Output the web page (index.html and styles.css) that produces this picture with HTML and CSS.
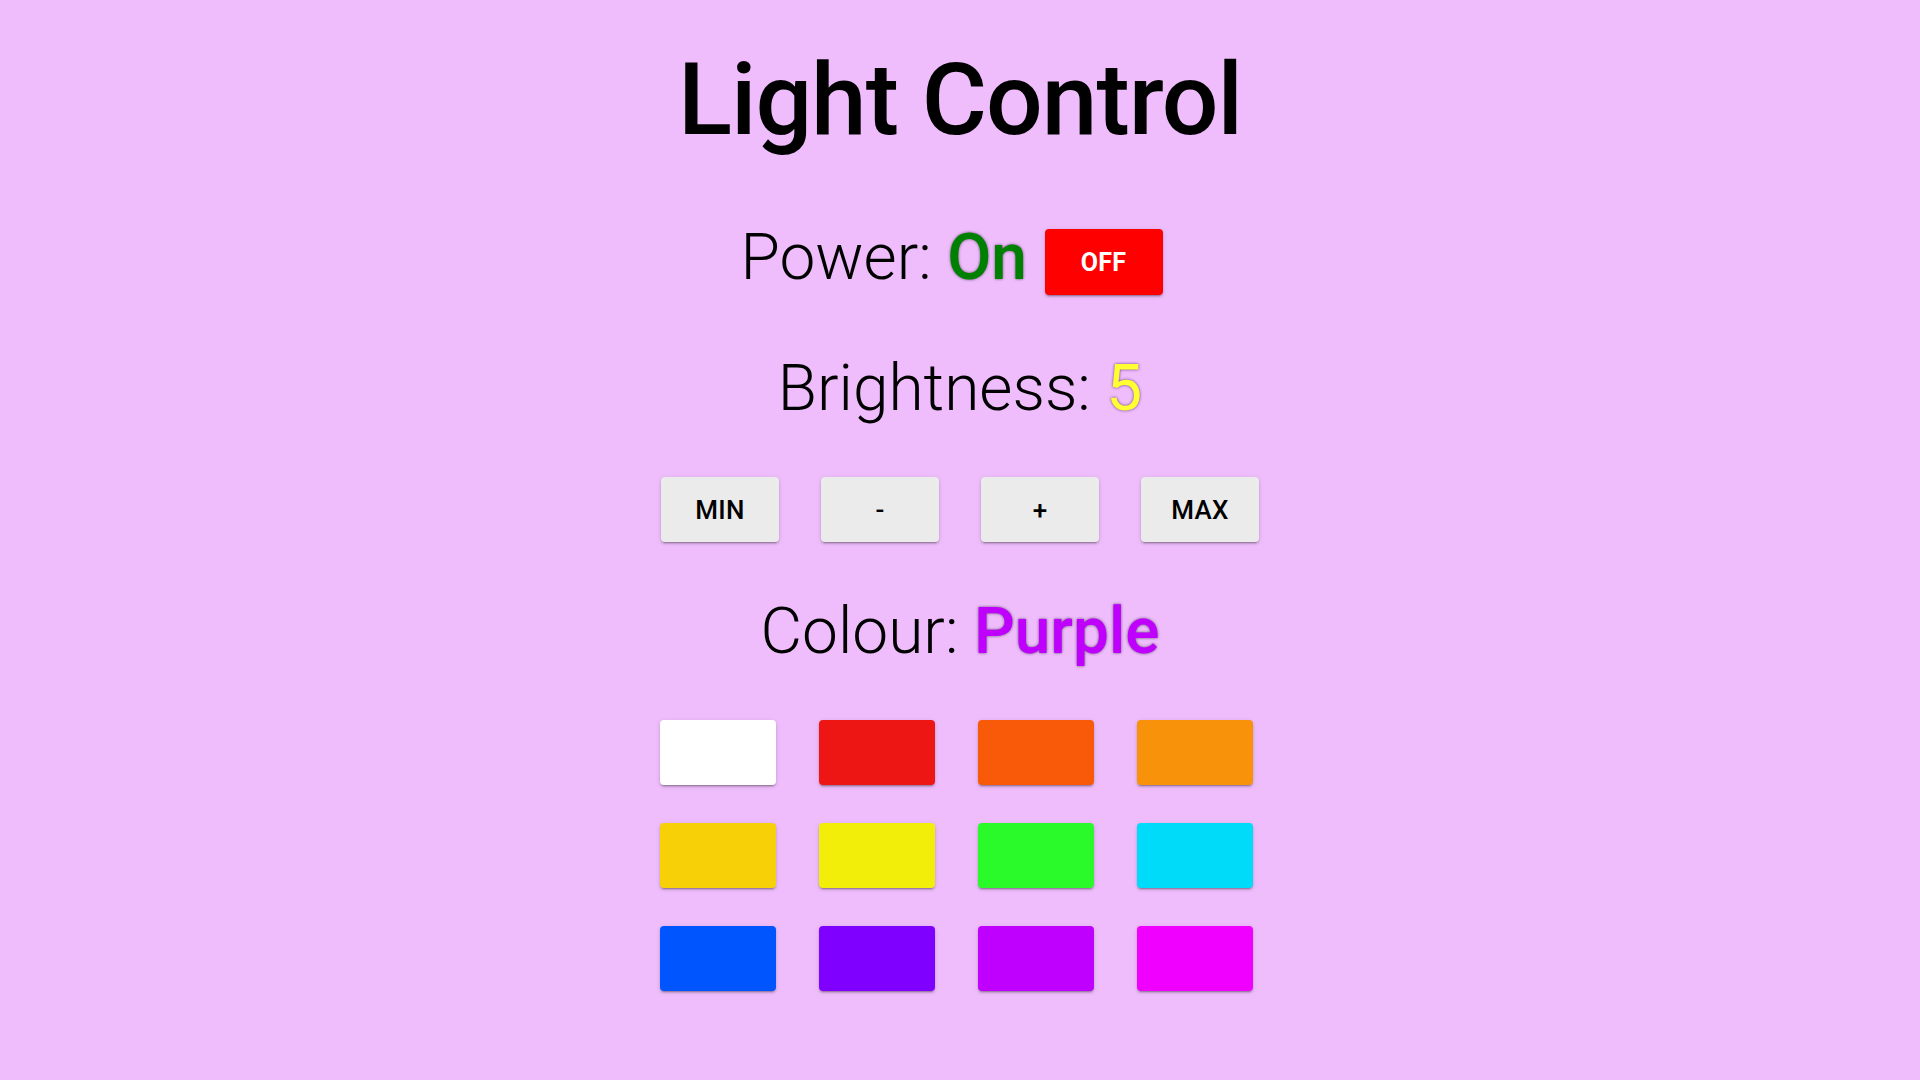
FILE: index.html
```html
<!DOCTYPE html>
<html lang="en">
<head>
<meta charset="utf-8">
<title>Light Control</title>
<link rel="stylesheet" href="styles.css">
</head>
<body>
<main class="app">
  <h1 class="title">Light Control</h1>

  <div class="status power">
    <span class="label">Power:</span>
    <span class="value value-on">On</span>
    <button class="btn btn-off" type="button">OFF</button>
  </div>

  <div class="status brightness">
    <span class="label">Brightness:</span>
    <span class="value value-bright">5</span>
  </div>

  <div class="controls">
    <button class="btn btn-grey" type="button">MIN</button>
    <button class="btn btn-grey" type="button">-</button>
    <button class="btn btn-grey" type="button">+</button>
    <button class="btn btn-grey" type="button">MAX</button>
  </div>

  <div class="status colour">
    <span class="label">Colour:</span>
    <span class="value value-colour">Purple</span>
  </div>

  <div class="swatches">
    <button class="swatch sw-white" type="button" aria-label="White"></button>
    <button class="swatch sw-red" type="button" aria-label="Red"></button>
    <button class="swatch sw-orangered" type="button" aria-label="Orange red"></button>
    <button class="swatch sw-orange" type="button" aria-label="Orange"></button>
    <button class="swatch sw-gold" type="button" aria-label="Gold"></button>
    <button class="swatch sw-yellow" type="button" aria-label="Yellow"></button>
    <button class="swatch sw-green" type="button" aria-label="Green"></button>
    <button class="swatch sw-cyan" type="button" aria-label="Cyan"></button>
    <button class="swatch sw-blue" type="button" aria-label="Blue"></button>
    <button class="swatch sw-violet" type="button" aria-label="Violet"></button>
    <button class="swatch sw-purple" type="button" aria-label="Purple"></button>
    <button class="swatch sw-magenta" type="button" aria-label="Magenta"></button>
  </div>
</main>
</body>
</html>
```

FILE: styles.css
```css
html, body {
  margin: 0;
  padding: 0;
}

body {
  background: #efbdfc;
  color: #000;
  font-family: Roboto, "Liberation Sans", Arial, sans-serif;
  min-height: 1080px;
}

.app {
  display: flex;
  flex-direction: column;
  align-items: center;
}

.title {
  margin: 50px 0 0;
  font-size: 100px;
  font-weight: 500;
  line-height: 100px;
  letter-spacing: -1px;
}

.status {
  font-size: 64px;
  font-weight: 300;
  line-height: 75px;
  height: 75px;
  white-space: nowrap;
}

.power {
  margin-top: 70px;
  padding-right: 17px;
}

.brightness {
  margin-top: 56px;
}

.colour {
  margin-top: 52px;
}

.value {
  font-weight: 500;
  text-shadow: 0 0 3px rgba(0, 0, 0, 0.6);
}

.value-on {
  color: #008000;
}

.value-bright {
  color: #ffff33;
  font-weight: 400;
  text-shadow: 0 0 3px rgba(60, 0, 80, 0.75);
}

.value-colour {
  color: #bf00ff;
}

.btn {
  box-sizing: border-box;
  width: 118px;
  height: 66px;
  border: 0;
  border-radius: 4px;
  padding: 0;
  font-family: Roboto, "Liberation Sans", Arial, sans-serif;
  font-size: 25px;
  font-weight: 500;
  letter-spacing: 0.3px;
  cursor: pointer;
  box-shadow: 0 3px 1px -2px rgba(0, 0, 0, 0.2),
              0 2px 2px 0 rgba(0, 0, 0, 0.14),
              0 1px 5px 0 rgba(0, 0, 0, 0.12);
}

.btn-off {
  margin-left: 2px;
  vertical-align: middle;
  background: #ff0000;
  color: #fff;
  font-weight: 700;
}

.btn-grey {
  background: #ebebeb;
  color: #000;
  height: 65px;
  font-size: 26px;
}

.controls {
  margin-top: 51px;
  display: flex;
  gap: 42px;
}

.swatches {
  margin-top: 51px;
  padding-right: 8px;
  display: grid;
  grid-template-columns: repeat(4, 116px);
  column-gap: 43px;
  row-gap: 38px;
}

.swatch {
  width: 116px;
  height: 65px;
  border: 0;
  padding: 0;
  border-radius: 4px;
  cursor: pointer;
  box-shadow: 0 3px 1px -2px rgba(0, 0, 0, 0.2),
              0 2px 2px 0 rgba(0, 0, 0, 0.14),
              0 1px 5px 0 rgba(0, 0, 0, 0.12);
}

.sw-white { background: #ffffff; }
.sw-red { background: #ee1515; }
.sw-orangered { background: #f95a0a; }
.sw-orange { background: #f7920a; }
.sw-gold { background: #f8d008; }
.sw-yellow { background: #f2ee0a; }
.sw-green { background: #2afa2a; }
.sw-cyan { background: #00dbfa; }
.sw-blue { background: #0055ff; }
.sw-violet { background: #8000ff; }
.sw-purple { background: #bf00ff; }
.sw-magenta { background: #f000ff; }
```
